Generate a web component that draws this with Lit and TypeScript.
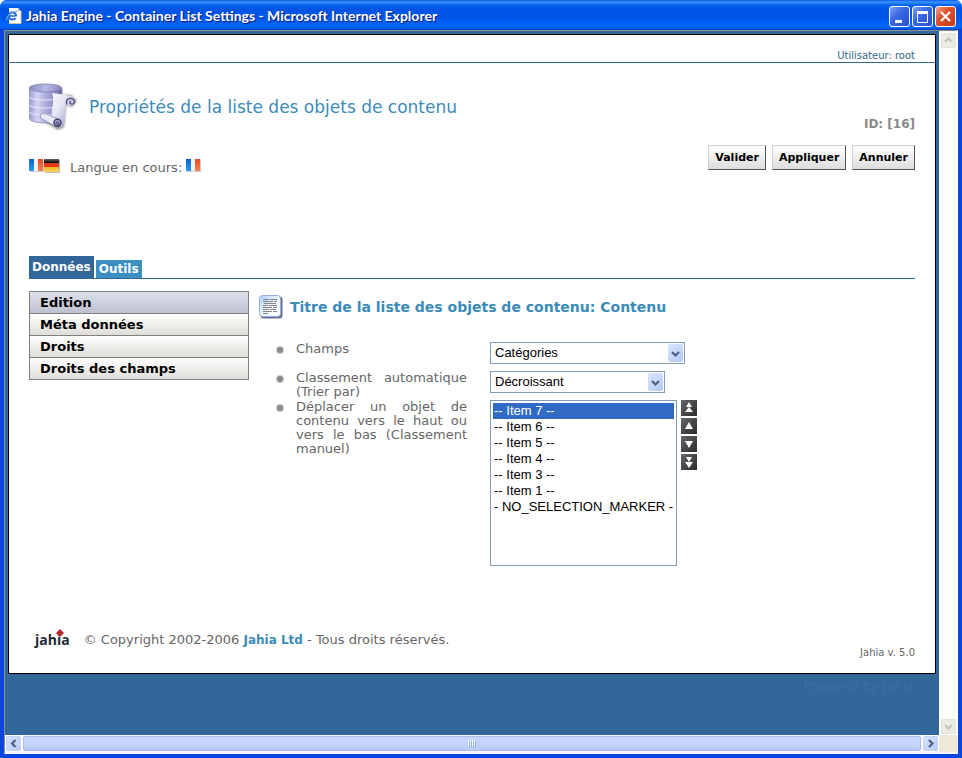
import { LitElement, html, css, svg } from "lit";
import { customElement, state } from "lit/decorators.js";
import { classMap } from "lit/directives/class-map.js";

const chevrons: Record<string, string> = {
  up: "M1 6 4.500 2.500 8 6",
  down: "M1 3 4.500 6.500 8 3",
  left: "M6.500 1 3 4.500 6.500 8",
  right: "M3 1 6.500 4.500 3 8",
};

const chevron = (dir: string) => html`<svg viewBox="0 0 9 9" width="9" height="9" aria-hidden="true">
  <path d=${chevrons[dir]} fill="none" stroke="currentColor" stroke-width="2.2" />
</svg>`;

const frenchFlag = html`<svg width="15" height="13" viewBox="0 0 15 13" role="img" aria-label="Français">
  <defs>
    <linearGradient id="fb" x2="0" y2="1"><stop stop-color="#0d5ecb" /><stop offset="1" stop-color="#2b9bf0" /></linearGradient>
    <linearGradient id="fr" x2="0" y2="1"><stop stop-color="#e84a22" /><stop offset="1" stop-color="#f4825c" /></linearGradient>
  </defs>
  <path d="M1 1h14v12H1z" fill="#ccc" />
  <path d="M0 0h5v12H0z" fill="url(#fb)" />
  <path d="M5 0h4v12H5z" fill="#f2f2f2" />
  <path d="M9 0h5v12H9z" fill="url(#fr)" />
</svg>`;

const germanFlag = html`<svg width="16" height="14" viewBox="0 0 16 14" role="img" aria-label="Deutsch">
  <defs>
    <linearGradient id="gb" x2="0" y2="1"><stop stop-color="#666" /><stop offset="1" stop-color="#050505" /></linearGradient>
    <linearGradient id="gy" x2="0" y2="1"><stop stop-color="#f0b020" /><stop offset="1" stop-color="#f9d860" /></linearGradient>
  </defs>
  <path d="M1 1h15v13H1z" fill="#bbb" />
  <path d="M0 0h15v4H0z" fill="url(#gb)" />
  <path d="M0 4h15v5H0z" fill="#e33b1c" />
  <path d="M0 8h15v5H0z" fill="url(#gy)" />
</svg>`;

const databaseIcon = html`<svg width="48" height="48" viewBox="0 0 48 48" aria-hidden="true">
  <defs>
    <linearGradient id="cyl"><stop stop-color="#9c9cd0" /><stop offset=".25" stop-color="#d4d4f5" /><stop offset=".6" stop-color="#a2a2d6" /><stop offset="1" stop-color="#66669f" /></linearGradient>
    <linearGradient id="lid" x2="1" y2="0"><stop stop-color="#8c8cc4" /><stop offset=".5" stop-color="#b8b8e4" /><stop offset="1" stop-color="#8a8abf" /></linearGradient>
    <linearGradient id="pap" x2="1" y2=".6"><stop stop-color="#ffffff" /><stop offset=".55" stop-color="#e9e9f7" /><stop offset="1" stop-color="#a4a4cc" /></linearGradient>
    <filter id="soft" x="-20%" y="-20%" width="150%" height="150%"><feGaussianBlur stdDeviation="1" /></filter>
  </defs>
  <path d="M26 12h16l6 6-5 6-6-2-2 22-6 3-15-9z" fill="#444" opacity=".6" filter="url(#soft)" />
  <path d="M0 5v30c0 3 8 5 17 5s16-2 16-5V5z" fill="url(#cyl)" stroke="#8a8abd" stroke-width=".8" />
  <ellipse cx="16.500" cy="5" rx="16.300" ry="4" fill="url(#lid)" stroke="#8080b6" stroke-width=".8" />
  <path d="M0 14c3 4 29 4 33 0M0 22c3 4 29 4 33 0M0 29c3 4 29 4 33 0" fill="none" stroke="#e6e6fb" />
  <path d="M23 10c7 1 12 1 18 3 6 1 7 6 4 8-2 3-6 3-8-1-1 8 0 14-2 20-1 4-4 5-7 4L12 34c-1-3 1-4 3-4l8 3c-1-8 3-15 0-23z" fill="url(#pap)" />
  <path d="M38 21c-2-4 2-7 6-5 3 2 1 6-2 5-2-1-1-3 0-3" fill="none" stroke="#45457c" stroke-width="1.200" />
  <path d="M12 31c3-1 5 0 8 1l9 4c4 2 4 8-1 8L13 36c-2-1-2-4-1-5z" fill="#eaeaf8" stroke="#8a8ab2" stroke-width=".8" />
  <circle cx="28.500" cy="39.800" r="3.600" fill="#9a9ac6" stroke="#34345f" stroke-width="1.200" />
  <path d="M27 41c0-3 3-2 3 0s-2 1-2 0" fill="none" stroke="#34345f" />
</svg>`;

const documentIcon = html`<svg width="25" height="25" viewBox="0 0 25 25" aria-hidden="true">
  <defs><linearGradient id="doc" x2="1" y2="1"><stop stop-color="#a9cbf8" /><stop offset=".5" stop-color="#f0f6ff" /><stop offset="1" stop-color="#fff" /></linearGradient></defs>
  <rect x="1.500" y="2.500" width="22" height="22" rx="3" fill="#6d6f92" />
  <rect x=".5" y="1.500" width="21" height="21" rx="3" fill="url(#doc)" stroke="#8fb0de" />
  <path d="M4 5.500h6m1 0h7M4 7.500h10m1 0h3M5 9.500h12M4 11.500h5m1 0h8M4 13.500h9m1 0h4M4 15.500h6m1 0h6M4 17.500h9m1 0h4M4 19.500h5" stroke="#85858a" />
</svg>`;

const explorerIcon = html`<svg width="16" height="16" viewBox="0 0 16 16" aria-hidden="true">
  <path d="M3 0h9l3 3v13H3z" fill="#fff" />
  <path d="M12 0v3h3z" fill="#b9b4a0" />
  <path d="M15 3v12.500H3" fill="none" stroke="#c9c3a8" />
  <circle cx="6.500" cy="8" r="3.600" fill="#fff" stroke="#1a68cc" stroke-width="2" />
  <path d="M4 8h6" stroke="#1a68cc" stroke-width="1.600" />
  <path d="M9 9.200h3" stroke="#fff" stroke-width="1.400" />
  <path d="M1 12C-1 9 6 3 12 3" fill="none" stroke="#6ab1f2" stroke-width="1.200" />
</svg>`;

const arrowShapes: Record<string, string> = {
  top: "M8 2l3 5H5zM8 7l4 5H4z",
  up: "M8 4l4 7H4z",
  down: "M8 12L4 5h8z",
  bottom: "M8 8L5 3h6zM8 14L4 8h8z",
};

@customElement("app-root")
export class AppRoot extends LitElement {
  @state() private tab = "Données";
  @state() private section = "Edition";

  private items = [
    "-- Item 7 --",
    "-- Item 6 --",
    "-- Item 5 --",
    "-- Item 4 --",
    "-- Item 3 --",
    "-- Item 1 --",
    "- NO_SELECTION_MARKER -",
  ];

  static styles = css`
    :host {
      display: block;
      font-family: Verdana, "DejaVu Sans", sans-serif;
      font-size: 13px;
      color: #666;
    }
    * { box-sizing: border-box; }
    button { font: inherit; padding: 0; margin: 0; cursor: pointer; }
    svg { display: block; flex: none; }
    .window {
      min-height: 100vh;
      display: flex;
      flex-direction: column;
      background: #0a46dd;
      border-radius: 7px 7px 0 0;
      overflow: hidden;
    }
    .titlebar {
      height: 30px;
      flex: none;
      display: flex;
      align-items: center;
      gap: 4px;
      padding: 2px 6px 0 6px;
      background: linear-gradient(#0a5be8 0, #3c95ff 2px, #0764f0 5px, #0054e3 9px, #0058ea 18px, #0068ff 26px, #0060f4 28px, #0340c0 30px);
      color: #fff;
      text-shadow: 1px 1px 1px #0a1883;
    }
    .caption {
      flex: 1;
      margin: 0;
      font: bold 14px/18px "Trebuchet MS", Lato, sans-serif;
      white-space: nowrap;
      overflow: hidden;
    }
    .controls { display: flex; gap: 2px; }
    .control {
      width: 21px;
      height: 21px;
      display: grid;
      place-items: center;
      border: 1px solid #fff;
      border-radius: 3px;
      background: linear-gradient(135deg, #7ea3f4, #3a69e4 40%, #2350d0);
    }
    .control.close { background: linear-gradient(135deg, #f0a08a, #e0502e 40%, #c23a12); }
    .frame {
      flex: 1;
      display: flex;
      flex-direction: column;
      margin: 0 4px 4px;
      border: 1px solid #8c8f90;
      border-right-color: #fff;
      border-bottom-color: #fff;
    }
    .viewport { flex: 1; display: flex; }
    .stage { flex: 1; min-width: 0; padding: 3px; background: #336699; }
    .sheet { background: #fff; border: 1px solid #000; }
    .userbar {
      height: 28px;
      padding: 15px 20px 0;
      border-bottom: 1px solid #336699;
      font-size: 10px;
      line-height: 12px;
      text-align: right;
      color: #336688;
    }
    .header { display: flex; justify-content: space-between; min-height: 193px; padding: 20px 20px 0; }
    .heading { display: flex; align-items: center; gap: 12px; }
    h1 { margin: 0; font-size: 17px; line-height: 24px; font-weight: normal; color: #3b8bb9; }
    .languages { display: flex; align-items: flex-start; gap: 10px; margin-top: 28px; line-height: 18px; }
    .flags { display: flex; }
    .current { display: flex; gap: 4px; }
    .actions { padding-top: 34px; text-align: right; }
    .ident { font-size: 12px; line-height: 14px; font-weight: bold; color: #888; }
    .buttons { display: flex; gap: 6px; margin-top: 14px; }
    .action {
      height: 25px;
      padding: 0 6px;
      border: 1px solid;
      border-color: #ccc #555 #555 #ccc;
      background: linear-gradient(#fff, #ddd);
      font-size: 11px;
      font-weight: bold;
      color: #000;
    }
    .tabs {
      display: flex;
      align-items: flex-end;
      gap: 2px;
      margin: 0 20px;
      border-bottom: 1px solid #336699;
    }
    .tab {
      height: 18px;
      padding: 0 3px;
      border: 0;
      background: #3b8fc3;
      color: #fff;
      font-size: 12px;
      font-weight: bold;
    }
    .tab.active { height: 22px; background: #336699; }
    .body { display: flex; gap: 10px; align-items: flex-start; padding: 12px 20px 0; min-height: 332px; }
    .menu { width: 220px; flex: none; border: 1px solid #808080; }
    .entry {
      display: block;
      width: 100%;
      height: 21px;
      padding: 0 10px;
      border: 0;
      background: linear-gradient(#fff, #dfddd8);
      color: #000;
      font-weight: bold;
      text-align: left;
    }
    .entry + .entry { height: 22px; border-top: 1px solid #808080; }
    .entry.active { background: linear-gradient(#dde1ea, #bdc0d2); }
    .content { flex: 1; padding-top: 3px; }
    .subject { display: flex; align-items: center; gap: 6px; height: 25px; }
    h2 { margin: 0; font-size: 14px; line-height: 20px; color: #3b8bb9; }
    .form { padding: 23px 0 0 18px; }
    .row { display: grid; grid-template-columns: 19px 171px auto; align-items: start; min-height: 29px; }
    .bullet {
      width: 6px;
      height: 6px;
      margin-top: 5px;
      border-radius: 50%;
      background: #888;
      box-shadow: 0 0 1px 1px #ccc;
    }
    .name { line-height: 14px; text-align: justify; }
    .field { margin-left: 23px; display: flex; gap: 4px; }
    .picker { display: block; position: relative; }
    .picker.wide { width: 195px; }
    .picker.narrow { width: 175px; }
    .picker select {
      appearance: none;
      width: 100%;
      height: 22px;
      padding: 0 20px 0 4px;
      border: 1px solid #7f9db9;
      border-radius: 0;
      background: #fff;
      color: #000;
      font: 13px/16px Arial, "Liberation Sans", sans-serif;
    }
    .drop {
      position: absolute;
      top: 2px;
      right: 2px;
      width: 15px;
      height: 18px;
      display: grid;
      place-items: center;
      border-radius: 2px;
      background: linear-gradient(135deg, #dbe6fe, #b4c9f8);
      color: #4d6185;
      pointer-events: none;
    }
    .list {
      width: 187px;
      height: 166px;
      padding: 2px;
      border: 1px solid #7f9db9;
      border-radius: 0;
      outline: 0;
      background: #fff;
      overflow: hidden;
      color: #000;
      font: 13px/16px Arial, "Liberation Sans", sans-serif;
    }
    .list option { height: 16px; min-height: 16px; padding: 0 1px; line-height: 16px; }
    .list option:checked {
      background: linear-gradient(#316ac5, #316ac5);
      color: #fff;
      -webkit-text-fill-color: #fff;
    }
    .order { display: flex; flex-direction: column; gap: 2px; }
    .move { width: 16px; height: 16px; border: 0; background: linear-gradient(135deg, #666, #2c2c30); }
    .footer { display: flex; justify-content: space-between; align-items: flex-start; padding: 18px 20px 14px 26px; }
    .legal { display: flex; align-items: center; gap: 14px; line-height: 22px; }
    .brand {
      position: relative;
      font: bold 14px/22px "Open Sans", sans-serif;
      color: #222b33;
    }
    .brand svg { position: absolute; top: 0; right: 6px; }
    .legal a { color: #3b8bb9; font-size: 12px; font-weight: bold; text-decoration: none; }
    .version { padding-top: 18px; font-size: 10px; line-height: 12px; }
    .powered { padding: 4px 22px 0 0; text-align: right; line-height: 16px; color: #3f6ea3; }
    .vscroll {
      width: 18px;
      flex: none;
      display: flex;
      flex-direction: column;
      justify-content: space-between;
      padding: 1px 0 0 1px;
      background: #fdfdfa;
    }
    .vscroll .stepper { background: #ecebe4; border-color: #fff; color: #c6c5bc; box-shadow: inset 0 0 0 1px #e4e2d6; }
    .hscroll { display: flex; height: 18px; flex: none; padding-bottom: 1px; background: #f7f8fc; }
    .stepper {
      width: 17px;
      height: 17px;
      flex: none;
      display: grid;
      place-items: center;
      border: 1px solid #fff;
      border-radius: 3px;
      background: linear-gradient(135deg, #dbe5fe, #b5c8f7);
      color: #4d6185;
      box-shadow: inset 0 0 0 1px #c3d1f3;
    }
    .thumb {
      flex: 1;
      display: grid;
      place-items: center;
      margin: 1px;
      border: 1px solid #a9bde8;
      border-radius: 2px;
      background: linear-gradient(#cad7fc, #c3d3fd 60%, #b7caf5);
    }
    .corner { width: 18px; background: #ece9d8; }
  `;

  private picker(id: string, value: string, size: string) {
    return html`<span class="picker ${size}">
      <select id=${id}><option>${value}</option></select>
      <span class="drop">${chevron("down")}</span>
    </span>`;
  }

  private move(kind: string, label: string) {
    return html`<button class="move" aria-label=${label}>
      <svg width="16" height="16" viewBox="0 0 16 16">${svg`<path d=${arrowShapes[kind]} fill="#fff" />`}</svg>
    </button>`;
  }

  render() {
    return html`<div class="window">
      <header class="titlebar">
        ${explorerIcon}
        <p class="caption">Jahia Engine - Container List Settings - Microsoft Internet Explorer</p>
        <div class="controls">
          <button class="control" aria-label="Réduire"><svg width="15" height="15"><path d="M3 11h7v3H3z" fill="#fff" /></svg></button>
          <button class="control" aria-label="Agrandir"><svg width="15" height="15"><path d="M2 3h11M2.500 3v10.500h10V3" fill="none" stroke="#fff" /><path d="M2 2h11v3H2z" fill="#fff" /></svg></button>
          <button class="control close" aria-label="Fermer"><svg width="15" height="15"><path d="M3 3l9 9M12 3l-9 9" stroke="#fff" stroke-width="2.200" /></svg></button>
        </div>
      </header>
      <div class="frame">
        <div class="viewport">
          <main class="stage">
            <div class="sheet">
              <div class="userbar">Utilisateur: root</div>
              <div class="header">
                <div>
                  <div class="heading">${databaseIcon}<h1>Propriétés de la liste des objets de contenu</h1></div>
                  <div class="languages">
                    <div class="flags">${frenchFlag}${germanFlag}</div>
                    <div class="current">Langue en cours: ${frenchFlag}</div>
                  </div>
                </div>
                <div class="actions">
                  <div class="ident">ID: [16]</div>
                  <div class="buttons">
                    ${["Valider", "Appliquer", "Annuler"].map((t) => html`<button class="action">${t}</button>`)}
                  </div>
                </div>
              </div>
              <nav class="tabs">
                ${["Données", "Outils"].map(
                  (t) => html`<button class=${classMap({ tab: true, active: t === this.tab })} @click=${() => (this.tab = t)}>${t}</button>`
                )}
              </nav>
              <div class="body">
                <nav class="menu">
                  ${["Edition", "Méta données", "Droits", "Droits des champs"].map(
                    (t) => html`<button class=${classMap({ entry: true, active: t === this.section })} @click=${() => (this.section = t)}>${t}</button>`
                  )}
                </nav>
                <section class="content">
                  <div class="subject">${documentIcon}<h2>Titre de la liste des objets de contenu: Contenu</h2></div>
                  <div class="form">
                    <div class="row">
                      <span class="bullet"></span>
                      <label class="name" for="fields">Champs</label>
                      <div class="field">${this.picker("fields", "Catégories", "wide")}</div>
                    </div>
                    <div class="row">
                      <span class="bullet"></span>
                      <label class="name" for="sort">Classement automatique (Trier par)</label>
                      <div class="field">${this.picker("sort", "Décroissant", "narrow")}</div>
                    </div>
                    <div class="row">
                      <span class="bullet"></span>
                      <label class="name" for="items">Déplacer un objet de contenu vers le haut ou vers le bas (Classement manuel)</label>
                      <div class="field">
                        <select class="list" id="items" size="10">
                          ${this.items.map((t, i) => html`<option ?selected=${i === 0}>${t}</option>`)}
                        </select>
                        <div class="order">
                          ${this.move("top", "Tout en haut")}${this.move("up", "Monter")}${this.move("down", "Descendre")}${this.move("bottom", "Tout en bas")}
                        </div>
                      </div>
                    </div>
                  </div>
                </section>
              </div>
              <footer class="footer">
                <div class="legal">
                  <span class="brand">jahia<svg width="8" height="8" viewBox="0 0 8 8"><path d="M4 0l4 4-4 4-4-4z" fill="#b3272d" /></svg></span>
                  <span>© Copyright 2002-2006 <a href="#">Jahia Ltd</a> - Tous droits réservés.</span>
                </div>
                <div class="version">Jahia v. 5.0</div>
              </footer>
            </div>
            <div class="powered">Powered by Jahia</div>
          </main>
          <div class="vscroll">
            <button class="stepper" aria-label="Haut">${chevron("up")}</button>
            <button class="stepper" aria-label="Bas">${chevron("down")}</button>
          </div>
        </div>
        <div class="hscroll">
          <button class="stepper" aria-label="Gauche">${chevron("left")}</button>
          <div class="thumb"><svg width="8" height="7"><path d="M.5 0v6m2-6v6m2-6v6m2-6v6" stroke="#fff" /><path d="M1.500 1v6m2-6v6m2-6v6m2-6v6" stroke="#8cb0f8" /></svg></div>
          <button class="stepper" aria-label="Droite">${chevron("right")}</button>
          <div class="corner"></div>
        </div>
      </div>
    </div>`;
  }
}
